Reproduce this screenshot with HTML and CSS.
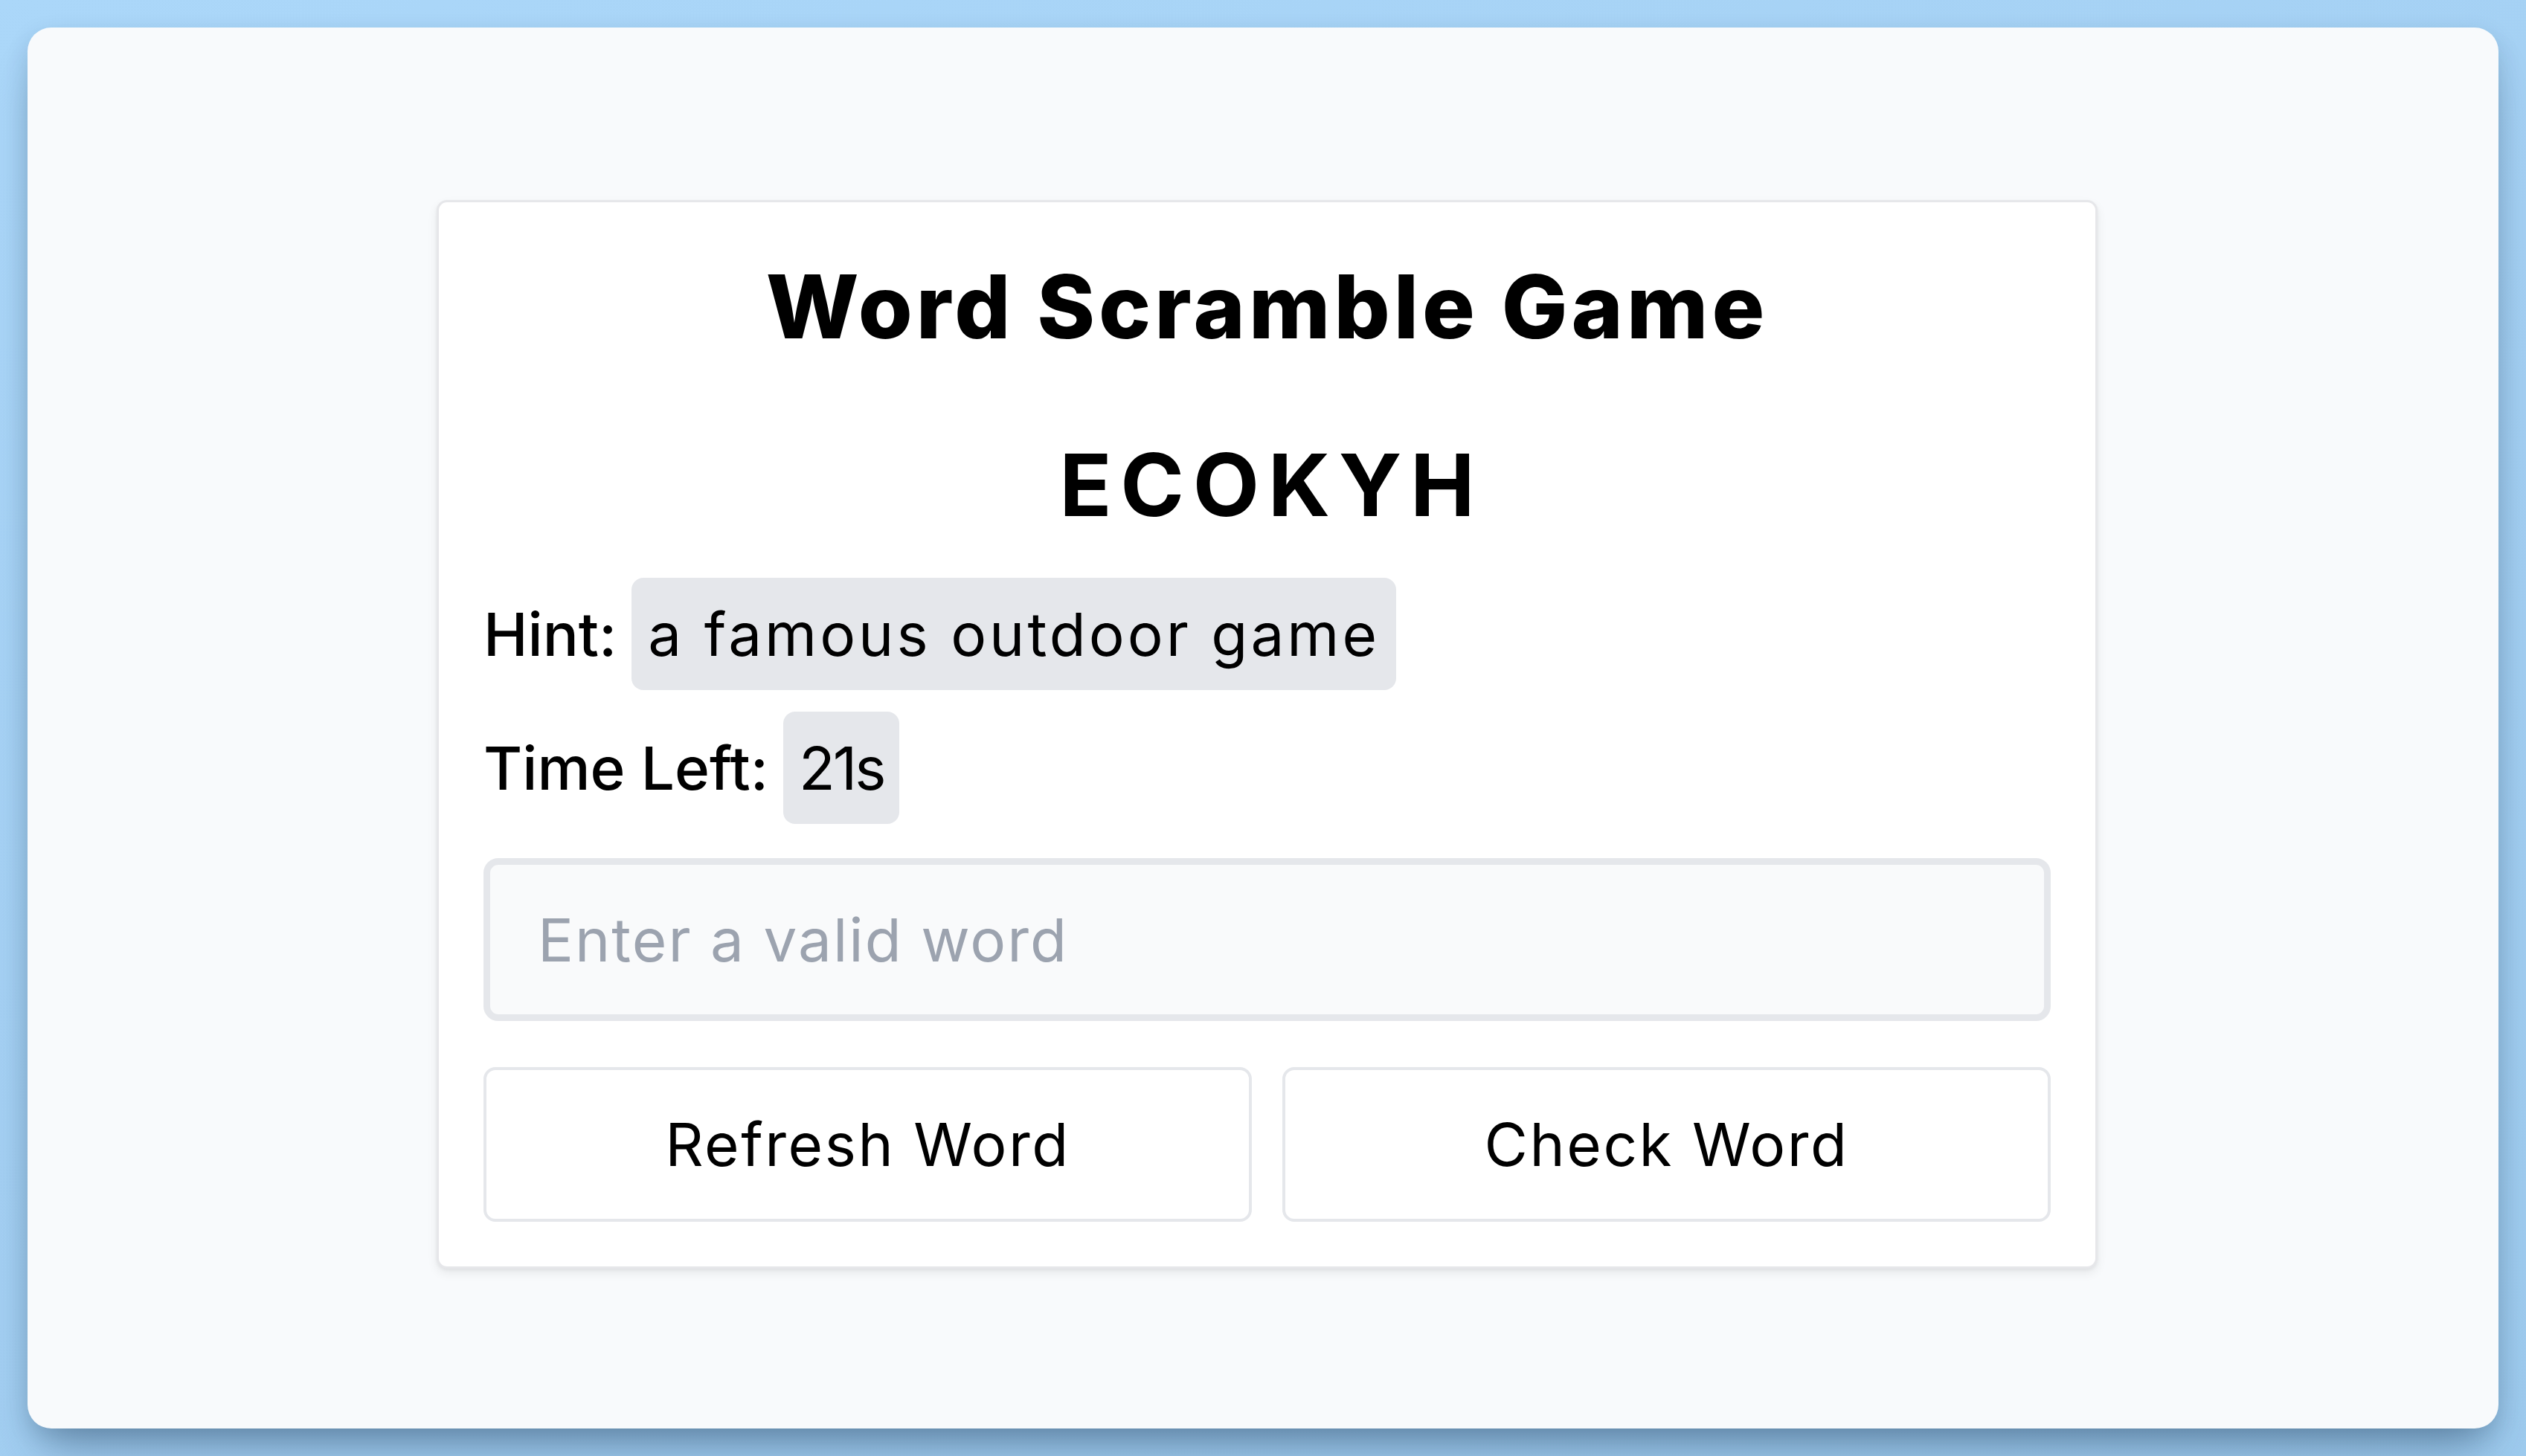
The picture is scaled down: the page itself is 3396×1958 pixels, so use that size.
FILE: index.html
```html
<!DOCTYPE html>
<html lang="en">
<head>
<meta charset="utf-8">
<title>Word Scramble Game</title>
<link rel="stylesheet" href="styles.css">
</head>
<body>
<main class="panel">
  <section class="card">
    <h1 class="title">Word Scramble Game</h1>
    <p class="word">ECOKYH</p>
    <div class="row row-hint">
      <span class="label">Hint:</span>
      <span class="pill pill-hint">a famous outdoor game</span>
    </div>
    <div class="row row-time">
      <span class="label">Time Left:</span>
      <span class="pill pill-time">21s</span>
    </div>
    <input class="guess" type="text" placeholder="Enter a valid word">
    <div class="actions">
      <button class="btn" type="button">Refresh Word</button>
      <button class="btn" type="button">Check Word</button>
    </div>
  </section>
</main>
</body>
</html>
```

FILE: styles.css
```css
* { box-sizing: border-box; }

html, body { height: 100%; }

body {
  margin: 0;
  padding: 37px;
  background: linear-gradient(160deg, #abd7f9 0%, #a3cff2 55%, #9ecbee 100%);
  font-family: Inter, "Noto Sans", sans-serif;
  color: #000;
}

.panel {
  height: 100%;
  background: #f8fafc;
  border-radius: 32px;
  box-shadow: 0 40px 60px -20px rgba(30, 60, 90, 0.45), 0 10px 30px rgba(30, 60, 90, 0.15);
  display: flex;
  align-items: center;
  justify-content: center;
}

.card {
  width: 2233px;
  margin-left: 11px;
  margin-top: 16px;
  background: #fff;
  border: 3px solid #e6e7ea;
  border-radius: 14px;
  padding: 60px 60px 60px;
  box-shadow: 0 6px 14px rgba(0, 0, 0, 0.07), 0 2px 4px rgba(0, 0, 0, 0.05);
  display: flex;
  flex-direction: column;
}

.title {
  margin: 10px 0 0;
  height: 140px;
  line-height: 140px;
  font-size: 118px;
  font-weight: 800;
  text-align: center;
  letter-spacing: 5px;
}

.word {
  margin: 100px 0 0;
  height: 140px;
  line-height: 140px;
  font-size: 116px;
  font-weight: 700;
  text-align: center;
  letter-spacing: 0.1em;
  text-indent: 0.1em;
}

.row {
  display: flex;
  align-items: center;
  gap: 20px;
  font-size: 80px;
}

.row-hint { margin-top: 55px; }
.row-time { margin-top: 29px; }

.label {
  font-weight: 500;
}

.pill {
  height: 151px;
  display: flex;
  align-items: center;
  padding: 0 22px;
  background: #e5e7eb;
  border-radius: 16px;
  font-weight: 400;
}

.pill-hint { letter-spacing: 4px; }
.pill-time { letter-spacing: -3px; padding: 0 20px 0 21px; }

.guess {
  display: block;
  width: 100%;
  height: 219px;
  margin-top: 46px;
  padding: 0 0 0 64px;
  border: 9px solid #e5e7eb;
  border-radius: 20px;
  background: #f9fafb;
  font-family: inherit;
  font-size: 80px;
  letter-spacing: 2px;
  color: #000;
  outline: none;
}

.guess::placeholder { color: #9ca3af; }

.actions {
  display: grid;
  grid-template-columns: 1fr 1fr;
  gap: 41px;
  margin-top: 62px;
}

.btn {
  height: 208px;
  border: 4px solid #e5e7eb;
  border-radius: 16px;
  background: #fff;
  font-family: inherit;
  font-size: 80px;
  font-weight: 400;
  letter-spacing: 2.5px;
  color: #000;
}
```
